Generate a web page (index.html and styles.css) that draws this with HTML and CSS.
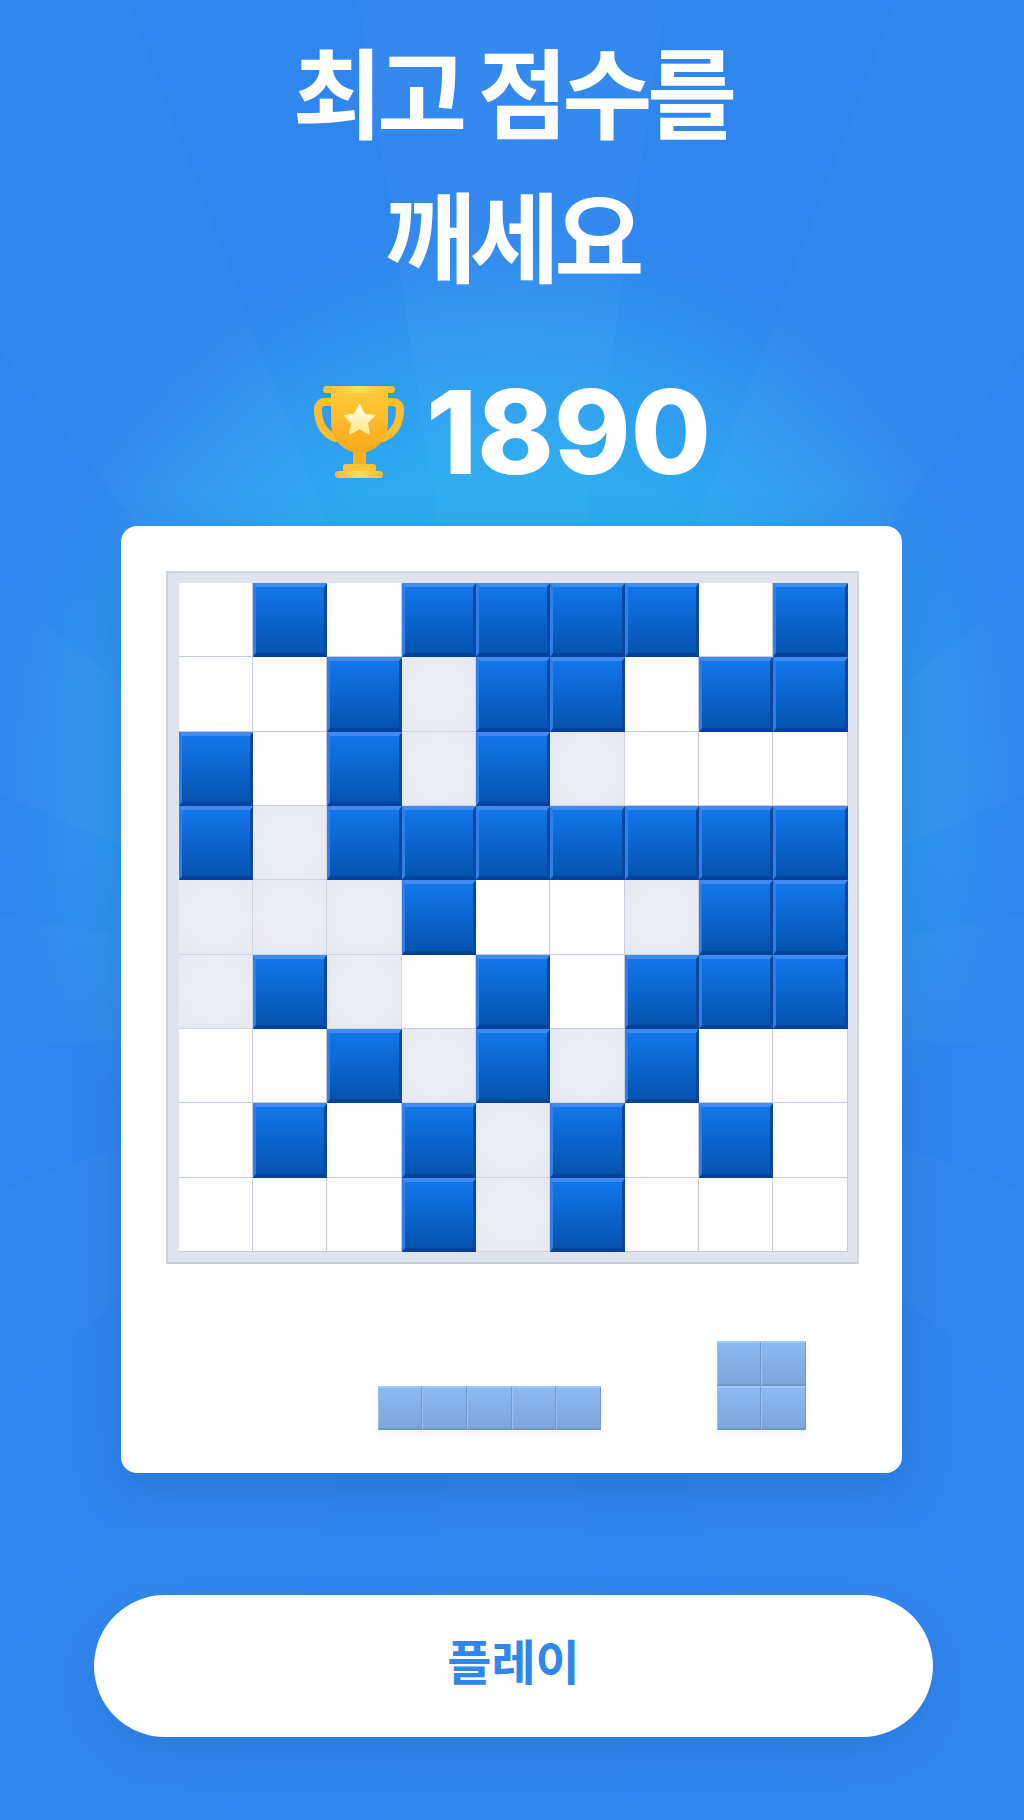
FILE: index.html
```html
<!DOCTYPE html>
<html lang="ko">
<head>
	<meta charset="UTF-8">
	<title>최고 점수를 깨세요</title>
	<link rel="stylesheet" href="styles.css">
</head>
<body>
	<div class="page">
		<h1 class="title">최고 점수를<br>깨세요</h1>
		<div class="score">
			<svg class="trophy" viewBox="12 9 92 94" width="92" height="94">
				<defs>
					<linearGradient id="gold" x1="0" y1="0" x2="0" y2="1">
						<stop offset="0" stop-color="#ffcb3a"/>
						<stop offset="1" stop-color="#fba81c"/>
					</linearGradient>
					<linearGradient id="lip" x1="0" y1="0" x2="1" y2="0">
						<stop offset="0" stop-color="#fcbc2a"/>
						<stop offset="0.5" stop-color="#ffdc60"/>
						<stop offset="1" stop-color="#fcbc2a"/>
					</linearGradient>
					<linearGradient id="starFill" x1="0" y1="0" x2="0" y2="1">
						<stop offset="0" stop-color="#ffffff"/>
						<stop offset="1" stop-color="#ffe680"/>
					</linearGradient>
				</defs>
				<path d="M32 26H24C20 26 17 29 17 33C17 47 22 57 34 62" fill="none" stroke="#fdbf30" stroke-width="8" stroke-linecap="round"/>
				<path d="M85 26H92C96 26 99 29 99 33C99 47 94 57 82 62" fill="none" stroke="#fdbf30" stroke-width="8" stroke-linecap="round"/>
				<rect x="52" y="72" width="13" height="18" fill="#fbb024"/>
				<path d="M30 15H87V46C87 63 74 77 58.500 77C43 77 30 63 30 46Z" fill="url(#gold)"/>
				<rect x="22" y="10" width="72" height="7" rx="3.500" fill="url(#lip)"/>
				<rect x="42" y="88" width="33" height="8" rx="3" fill="#fdc436"/>
				<rect x="34" y="95" width="48" height="7" rx="3.500" fill="url(#lip)"/>
				<path d="M58.500 28L63.500 38L74 39.500L66.500 47L68.300 58L58.500 52.800L48.700 58L50.500 47L43 39.500L53.500 38Z" fill="url(#starFill)" stroke="#fff3b0" stroke-width="1" stroke-linejoin="round"/>
			</svg>
			<span class="score-num">1890</span>
		</div>

		<div class="card">
			<div class="board">
				<div class="grid">
					<div class="w"></div><div class="b"></div><div class="w"></div><div class="b"></div><div class="b"></div><div class="b"></div><div class="b"></div><div class="w"></div><div class="b"></div>
					<div class="w"></div><div class="w"></div><div class="b"></div><div class="g"></div><div class="b"></div><div class="b"></div><div class="w"></div><div class="b"></div><div class="b"></div>
					<div class="b"></div><div class="w"></div><div class="b"></div><div class="g"></div><div class="b"></div><div class="g"></div><div class="w"></div><div class="w"></div><div class="w"></div>
					<div class="b"></div><div class="g"></div><div class="b"></div><div class="b"></div><div class="b"></div><div class="b"></div><div class="b"></div><div class="b"></div><div class="b"></div>
					<div class="g"></div><div class="g"></div><div class="g"></div><div class="b"></div><div class="w"></div><div class="w"></div><div class="g"></div><div class="b"></div><div class="b"></div>
					<div class="g"></div><div class="b"></div><div class="g"></div><div class="w"></div><div class="b"></div><div class="w"></div><div class="b"></div><div class="b"></div><div class="b"></div>
					<div class="w"></div><div class="w"></div><div class="b"></div><div class="g"></div><div class="b"></div><div class="g"></div><div class="b"></div><div class="w"></div><div class="w"></div>
					<div class="w"></div><div class="b"></div><div class="w"></div><div class="b"></div><div class="g"></div><div class="b"></div><div class="w"></div><div class="b"></div><div class="w"></div>
					<div class="w"></div><div class="w"></div><div class="w"></div><div class="b"></div><div class="g"></div><div class="b"></div><div class="w"></div><div class="w"></div><div class="w"></div>
				</div>
			</div>
			<div class="tray">
				<div class="piece piece-line">
					<div></div><div></div><div></div><div></div><div></div>
				</div>
				<div class="piece piece-square">
					<div></div><div></div><div></div><div></div>
				</div>
			</div>
		</div>

		<button class="play">플레이</button>
	</div>
</body>
</html>
```

FILE: styles.css
```css
body {
	margin: 0;
	font-family: "Noto Sans CJK KR", "Noto Sans", sans-serif;
}
.page {
	box-sizing: border-box;
	width: 1024px;
	height: 1820px;
	padding-top: 16px;
	overflow: hidden;
	display: flex;
	flex-direction: column;
	align-items: center;
	background-color: #2f86ee;
	background-image:
		conic-gradient(from 0deg at 512px 1005px,
			rgba(255,255,255,.022) 0deg 8.7deg,
			rgba(0,0,0,0) 8.7deg 21deg,
			rgba(255,255,255,.018) 21deg 38deg,
			rgba(0,0,0,0) 38deg 50.7deg,
			rgba(255,255,255,.018) 50.7deg 67.7deg,
			rgba(0,0,0,0) 67.7deg 80deg,
			rgba(255,255,255,.018) 80deg 95deg,
			rgba(0,0,0,0) 95deg 110deg,
			rgba(255,255,255,.015) 110deg 127deg,
			rgba(0,0,0,0) 127deg 143deg,
			rgba(255,255,255,.01) 143deg 160deg,
			rgba(0,0,0,0) 160deg 172deg,
			rgba(255,255,255,.01) 172deg 188deg,
			rgba(0,0,0,0) 188deg 200deg,
			rgba(255,255,255,.01) 200deg 217deg,
			rgba(0,0,0,0) 217deg 233deg,
			rgba(255,255,255,.015) 233deg 250deg,
			rgba(0,0,0,0) 250deg 265deg,
			rgba(255,255,255,.018) 265deg 280deg,
			rgba(0,0,0,0) 280deg 292.300deg,
			rgba(255,255,255,.018) 292.300deg 309.300deg,
			rgba(0,0,0,0) 309.300deg 322deg,
			rgba(255,255,255,.018) 322deg 339deg,
			rgba(0,0,0,0) 339deg 351.300deg,
			rgba(255,255,255,.022) 351.300deg 360deg),
		radial-gradient(ellipse 505px 540px at 512px 770px,
			#2db0f0 0%, #2daaf0 58%, rgba(47,153,240,.95) 80%, rgba(47,134,238,0) 100%);
}
.title {
	margin: 0;
	font-size: 98px;
	font-weight: 700;
	line-height: 144px;
	letter-spacing: -5.500px;
	word-spacing: -6px;
	color: #fff;
	text-align: center;
}
.score {
	box-sizing: border-box;
	display: flex;
	align-items: center;
	justify-content: center;
	gap: 21px;
	height: 222px;
	padding-top: 34px;
}
.trophy {
	flex: none;
}
.score-num {
	font-family: Inter, "Liberation Sans", sans-serif;
	font-size: 116px;
	font-weight: 800;
	line-height: 1;
	color: #fff;
}
.card {
	box-sizing: border-box;
	width: 781px;
	height: 947px;
	margin-right: 1px;
	padding: 45px 43px 43px 45px;
	background: #fff;
	border-radius: 16px;
	box-shadow: 0 16px 50px rgba(0, 40, 120, .2);
}
.board {
	box-sizing: border-box;
	width: 693px;
	height: 693px;
	padding: 10px 9.500px 10px 10.500px;
	background: #dfe3ec;
	border: 2px solid #d0d4de;
	border-bottom-color: #c9cdd8;
}
.grid {
	display: grid;
	grid-template-columns: repeat(9, 1fr);
	grid-template-rows: repeat(9, 1fr);
	height: 100%;
}
.grid div {
	box-sizing: border-box;
}
.w {
	background: #fdfdfe;
	border-right: 1px solid #c6cbde;
	border-bottom: 1px solid #c6cbde;
}
.g {
	background: radial-gradient(circle, #eff0f6, #e6e8f1);
	border-right: 1px solid #d0d4e3;
	border-bottom: 1px solid #d0d4e3;
}
.b {
	background: linear-gradient(#1276ea, #0453b0);
	border-style: solid;
	border-width: 4px 3px;
	border-color: #3f8bef #0a47a0 #03429a #2f7fe6;
}
.tray {
	display: flex;
	justify-content: flex-end;
	align-items: flex-end;
	gap: 116px;
	margin-top: 77px;
	padding-right: 53px;
}
.piece {
	display: grid;
	box-shadow: 0 4px 8px rgba(0, 30, 90, .05);
}
.piece-line {
	grid-template-columns: repeat(5, 44.6px);
}
.piece-square {
	grid-template-columns: repeat(2, 44.6px);
}
.piece div {
	box-sizing: border-box;
	height: 44.500px;
	background: linear-gradient(#8ab9f1, #7ca7db);
	border-style: solid;
	border-width: 2px 1px;
	border-color: #a5c9f5 #7299cc #7096c8 #9cc0ee;
}
.play {
	display: block;
	width: 839px;
	height: 142px;
	margin-top: 122px;
	margin-left: 3px;
	padding: 0 0 15px;
	border: 0;
	border-radius: 71px;
	background: #fff;
	box-shadow: 0 18px 40px rgba(20, 60, 150, .16);
	font-family: inherit;
	font-size: 48px;
	font-weight: 700;
	color: #2f86ee;
}
```
